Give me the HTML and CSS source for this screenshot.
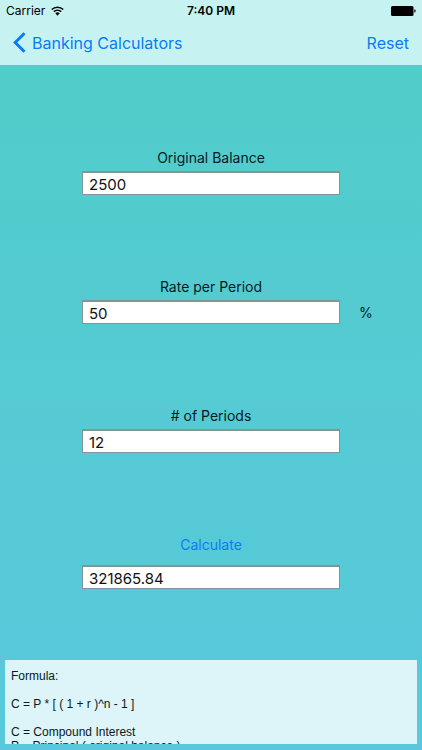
FILE: index.html
```html
<!DOCTYPE html>
<html lang="en">
<head>
<meta charset="utf-8">
<meta name="viewport" content="width=device-width, initial-scale=1">
<title>Compound Interest</title>
<link rel="stylesheet" href="styles.css">
</head>
<body>
<form class="screen">
  <header class="top">
    <div class="status">
      <div class="carrier">
        <span>Carrier</span>
        <svg class="wifi" viewBox="0 0 12 9" aria-hidden="true">
          <path d="M.7 3.1a7.6 7.6 0 0 1 10.6 0M2.6 5.1a4.9 4.9 0 0 1 6.8 0" fill="none" stroke="#000" stroke-width="1.4"/>
          <path d="M4 6.6a2.8 2.8 0 0 1 4 0L6 8.8z"/>
        </svg>
      </div>
      <span class="time">7:40 PM</span>
      <svg class="battery" viewBox="0 0 25 10" aria-hidden="true">
        <rect width="22.5" height="10" rx="1.5"/>
        <path d="M23.3 3.3q1.4.3 1.4 1.7t-1.4 1.7z"/>
      </svg>
    </div>
    <nav class="nav">
      <a class="back" href="#">
        <svg class="chevron" viewBox="0 0 13 21" aria-hidden="true">
          <path d="M11.5 1.2 2.2 10.5l9.3 9.3" fill="none" stroke="currentColor" stroke-width="3"/>
        </svg>
        <span>Banking Calculators</span>
      </a>
      <button class="reset" type="reset">Reset</button>
    </nav>
  </header>
  <main class="fields">
    <div class="field">
      <label class="label" for="balance">Original Balance</label>
      <input class="box" id="balance" type="text" value="2500">
    </div>
    <div class="field">
      <label class="label" for="rate">Rate per Period</label>
      <input class="box" id="rate" type="text" value="50">
      <span class="unit">%</span>
    </div>
    <div class="field">
      <label class="label" for="periods"># of Periods</label>
      <input class="box" id="periods" type="text" value="12">
    </div>
    <div class="field result">
      <button class="label calculate" id="calculate" type="button">Calculate</button>
      <input class="box" type="text" value="321865.84" aria-labelledby="calculate">
    </div>
  </main>
  <section class="formula">
    <p>Formula:</p>
    <p>C = P * [ ( 1 + r )^n - 1 ]</p>
    <p>C = Compound Interest<br>P = Principal ( original balance )</p>
  </section>
</form>
</body>
</html>
```
FILE: styles.css
```css
* {
  box-sizing: border-box;
}

body {
  margin: 0;
  font-family: Inter, "Liberation Sans", sans-serif;
  color: #061b1e;
}

button {
  padding: 0;
  border: 0;
  background: none;
  font: inherit;
  color: #087cf7;
}

.screen {
  display: flex;
  flex-direction: column;
  min-height: 100vh;
  background: linear-gradient(#50cdc8, #59c8dd);
}

.top {
  height: 65px;
  background: #c6f3f1;
}

.status {
  display: grid;
  grid-template-columns: 1fr auto 1fr;
  align-items: center;
  height: 21px;
  padding: 0 6px;
  font-size: 12px;
  color: #000;
}

.carrier {
  display: flex;
  align-items: center;
  gap: 6px;
}

.wifi {
  width: 13px;
  height: 10px;
}

.time {
  font-weight: 600;
}

.battery {
  justify-self: end;
  width: 25px;
  height: 10px;
}

.nav {
  display: flex;
  align-items: center;
  justify-content: space-between;
  height: 43px;
  padding: 0 13px;
  font-size: 16px;
}

.back {
  display: flex;
  align-items: center;
  gap: 6px;
  color: #087cf7;
  text-decoration: none;
}

.chevron {
  width: 13px;
  height: 21px;
}

.fields {
  display: flex;
  flex: 1;
  flex-direction: column;
  gap: 82px;
  padding: 83px 0 70px;
}

.field {
  display: grid;
  grid-template-columns: 82px 1fr 82px;
  row-gap: 3px;
  align-items: center;
  font-size: 14px;
}

.label {
  grid-column: 2;
  line-height: 20px;
  text-align: center;
}

.box {
  grid-column: 2;
  width: 100%;
  height: 24px;
  margin: 0;
  padding: 2px 6px 0;
  border: 1px solid #7f9596;
  border-top-width: 2px;
  border-radius: 0;
  background: #fff;
  font: inherit;
  font-size: 15px;
  color: #111;
}

.unit {
  padding-left: 19px;
}

.result {
  row-gap: 10px;
}

.calculate {
  justify-self: center;
}

.formula {
  height: 84px;
  margin: 0 5px 6px;
  padding: 9px 6px 0;
  overflow: hidden;
  background: #ddf4f8;
  font-family: "Liberation Sans", sans-serif;
  font-size: 12px;
  line-height: 14px;
}

.formula p {
  margin: 0 0 14px;
}
```
